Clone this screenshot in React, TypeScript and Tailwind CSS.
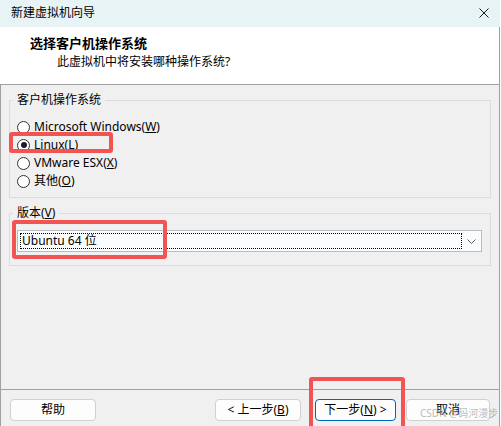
import React from 'react';

const Radio: React.FC<{ checked?: boolean; children: React.ReactNode }> = ({ checked, children }) => (
  <div className="flex h-[18px] items-center gap-[4px]">
    <span className="flex h-[13px] w-[13px] items-center justify-center rounded-full border border-[#333333] bg-white">
      {checked && <span className="h-[6px] w-[6px] rounded-full bg-[#1a1a2e]" />}
    </span>
    <span className="text-[12px] leading-[18px] text-black">{children}</span>
  </div>
);

const Button: React.FC<{ className?: string; primary?: boolean; children: React.ReactNode }> = ({
  className = '',
  primary,
  children
}) => (
  <button
    className={`flex h-[22px] items-center justify-center rounded-[4px] border bg-[#fdfdfd] text-[12px] leading-none text-black ${
      primary ? 'border-[#0067c0]' : 'border-[#d0d0d0]'
    } ${className}`}
  >
    {children}
  </button>
);

export default function App() {
  return (
    <div className="relative h-[426px] w-[501px] overflow-hidden bg-white font-['Noto_Sans','Noto_Sans_CJK_SC',sans-serif] text-black">
      <div className="flex h-full w-[500px] flex-col">
        {/* title bar */}
        <div className="flex h-[27px] items-center justify-between bg-[#e8f3f5] pb-[2px] pl-[11px] pr-[11px]">
          <span className="text-[12px] leading-[16px]">新建虚拟机向导</span>
          <svg width="10" height="10" viewBox="0 0 10 10" className="text-[#1a1a1a]">
            <path d="M0.5 0.5 L9.5 9.5 M9.5 0.5 L0.5 9.5" stroke="currentColor" strokeWidth="1" />
          </svg>
        </div>

        {/* header */}
        <div className="h-[58px] border-b border-r border-[#a0a0a0] bg-white pt-[7px]">
          <div className="pl-[30px] text-[13px] font-bold leading-[18px]">选择客户机操作系统</div>
          <div className="mt-[1px] pl-[57px] text-[12px] leading-[18px]">此虚拟机中将安装哪种操作系统?</div>
        </div>

        {/* body */}
        <div className="flex-1 border-x border-[#a0a0a0] bg-[#f0f0f0]">
          <fieldset className="mx-[8px] mt-[7px] border border-[#dcdcdc] pb-[7px]">
            <legend className="ml-[3px] px-[4px] text-[12px] leading-[16px]">客户机操作系统</legend>
            <div className="flex flex-col pl-[7px] pt-[10px]">
              <Radio>
                Microsoft Windows(<span className="underline">W</span>)
              </Radio>
              <Radio checked>
                Linux(<span className="underline">L</span>)
              </Radio>
              <Radio>
                VMware ESX(<span className="underline">X</span>)
              </Radio>
              <Radio>
                其他(<span className="underline">O</span>)
              </Radio>
            </div>
          </fieldset>

          <fieldset className="mx-[8px] mt-[7px] border border-[#dcdcdc] pb-[13px]">
            <legend className="ml-[3px] px-[4px] text-[12px] leading-[16px]">
              版本(<span className="underline">V</span>)
            </legend>
            <div className="ml-[7px] mr-[8px] mt-[9px] flex h-[22px] items-center border border-[#b9bdc3] bg-[#fbfcfd]">
              <div className="ml-[2px] flex h-[16px] flex-1 items-center border border-dotted border-black pl-[1px] text-[12px] leading-none">
                Ubuntu 64 位
              </div>
              <div className="flex w-[19px] items-center justify-center">
                <svg width="9" height="5" viewBox="0 0 9 5">
                  <path d="M0.5 0.5 L4.5 4.5 L8.5 0.5" fill="none" stroke="#606060" strokeWidth="1" />
                </svg>
              </div>
            </div>
          </fieldset>
        </div>

        {/* footer */}
        <div className="flex h-[37px] border-x border-t border-[#a0a0a0] bg-[#f0f0f0] pl-[9px] pr-[9px] pt-[9px]">
          <Button className="w-[86px]">帮助</Button>
          <div className="flex-1" />
          <Button className="w-[86px]">
            &lt; 上一步(<span className="underline">B</span>)
          </Button>
          <Button primary className="ml-[14px] w-[81px]">
            下一步(<span className="underline">N</span>) &gt;
          </Button>
          <Button className="ml-[10px] w-[84px]">取消</Button>
        </div>
      </div>

      {/* annotations */}
      <div className="pointer-events-none absolute left-[9px] top-[132px] h-[21px] w-[104px] rounded-[3px] border-4 border-[#f25454]" />
      <div className="pointer-events-none absolute left-[12px] top-[220px] h-[39px] w-[155px] rounded-[3px] border-4 border-[#f25454]" />
      <div className="pointer-events-none absolute left-[309px] top-[377px] h-[53px] w-[96px] rounded-[3px] border-4 border-[#f25454]" />
      <div className="pointer-events-none absolute left-[420px] top-[405px] whitespace-nowrap text-[10px] leading-[16px] text-[#a8a8a8]/80">
        CSDN @码河漫步
      </div>
    </div>
  );
}
